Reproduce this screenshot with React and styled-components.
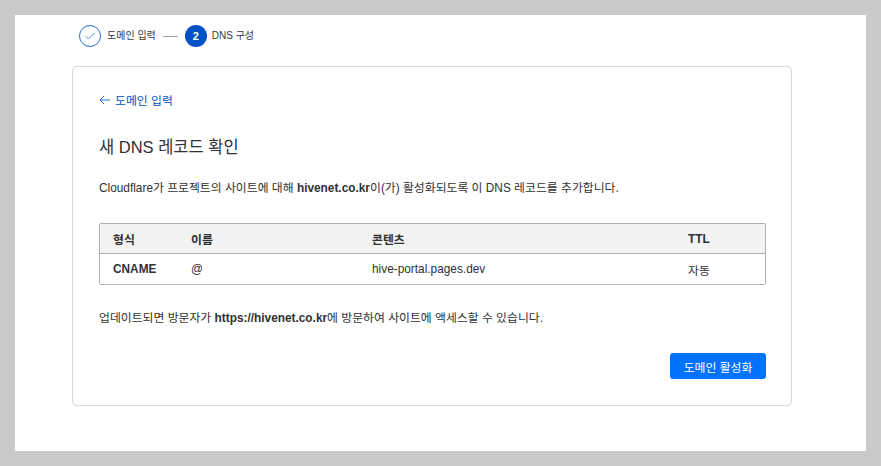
import React from 'react';
import styled, { createGlobalStyle } from 'styled-components';

const FONT = '"Liberation Sans", "Noto Sans CJK KR", sans-serif';
const Global = createGlobalStyle`
  html, body { margin: 0; padding: 0; background: #cacaca; }
  body { font-family: ${FONT}; }
`;
const Frame = styled.div`width: 881px; height: 466px; box-sizing: border-box; padding: 15px; overflow: hidden;`;
const Page = styled.main`width: 851px; height: 436px; background: #fff; box-sizing: border-box; padding: 0 75px 0 57px; overflow: hidden;`;
const Steps = styled.ol`list-style: none; margin: 0; padding: 0 0 0 7px; height: 52px; display: flex; align-items: flex-start; gap: 7px; font-size: 10px; color: #36393a;`;
const Step = styled.li`display: flex; align-items: center; gap: 5px; height: 22px; margin-top: 10px;`;
const Label = styled.span`position: relative; top: -2px;`;
const Done = styled.span`width: 20px; height: 20px; margin-right: 1px; border: 1px solid #2a6fd0; border-radius: 50%; display: flex; align-items: center; justify-content: center;`;
const Active = styled.span`width: 22px; height: 22px; background: #0051c3; color: #fff; border-radius: 50%; display: flex; align-items: center; justify-content: center; font-weight: 700; font-size: 11px;`;
const Line = styled.span`width: 15px; height: 1px; background: #a0a0a0; margin-top: 21px;`;
const Card = styled.section`width: 720px; height: 340px; margin-top: -1px; box-sizing: border-box; border: 1px solid #d9d9d9; border-radius: 5px; padding: 25px 25px 0 26px;`;
const Back = styled.a`display: flex; align-items: center; gap: 4px; color: #0051c3; font-size: 11.85px; height: 14px;`;
const BackIcon = styled.svg`position: relative; top: 1px;`;
const Title = styled.h2`margin: 31px 0 0; font-size: 16.5px; line-height: 20px; font-weight: 400; color: #313131;`;
const Text = styled.p`margin: ${p => p.$top}px 0 0; font-size: 11.85px; line-height: 15px; color: #313131; b { font-weight: 700; }`;
const Table = styled.div`margin-top: 27px; border: 1px solid #b0b0b0; border-radius: 2px; font-size: 11.85px; color: #313131;`;
const Row = styled.div`display: grid; grid-template-columns: 78px 181px 316px 1fr; align-items: center; height: ${p => p.$head ? 29 : 30}px; padding-left: 13px; background: ${p => p.$head ? '#f2f2f2' : '#fff'}; border-top: ${p => p.$head ? 'none' : '1px solid #b0b0b0'}; font-weight: ${p => p.$head ? 700 : 400};`;
const Strong = styled.span`font-weight: 700;`;
const Actions = styled.div`display: flex; justify-content: flex-end; margin-top: 27px;`;
const Button = styled.button`width: 96px; height: 26px; border: 0; border-radius: 3px; background: #0072ff; color: #fff; font: 400 11.85px ${FONT};`;

export default function App() {
  return (
    <>
      <Global />
      <Frame>
        <Page>
          <Steps>
            <Step>
              <Done><svg width="12" height="10" viewBox="0 0 12 10" fill="none" stroke="#5a8fd8"><path d="M1.5 5 4.5 8 10.5 2" /></svg></Done>
              <Label>도메인 입력</Label>
            </Step>
            <Line />
            <Step><Active>2</Active><Label>DNS 구성</Label></Step>
          </Steps>
          <Card>
            <Back>
              <BackIcon width="12" height="10" viewBox="0 0 12 10" fill="none" stroke="#2a6fd0"><path d="M11 5H1M5 1 1 5l4 4" /></BackIcon>
              도메인 입력
            </Back>
            <Title>새 DNS 레코드 확인</Title>
            <Text $top={24}>Cloudflare가 프로젝트의 사이트에 대해 <b>hivenet.co.kr</b>이(가) 활성화되도록 이 DNS 레코드를 추가합니다.</Text>
            <Table>
              <Row $head><span>형식</span><span>이름</span><span>콘텐츠</span><span>TTL</span></Row>
              <Row><Strong>CNAME</Strong><span>@</span><span>hive-portal.pages.dev</span><span>자동</span></Row>
            </Table>
            <Text $top={26}>업데이트되면 방문자가 <b>https://hivenet.co.kr</b>에 방문하여 사이트에 액세스할 수 있습니다.</Text>
            <Actions><Button>도메인 활성화</Button></Actions>
          </Card>
        </Page>
      </Frame>
    </>
  );
}
